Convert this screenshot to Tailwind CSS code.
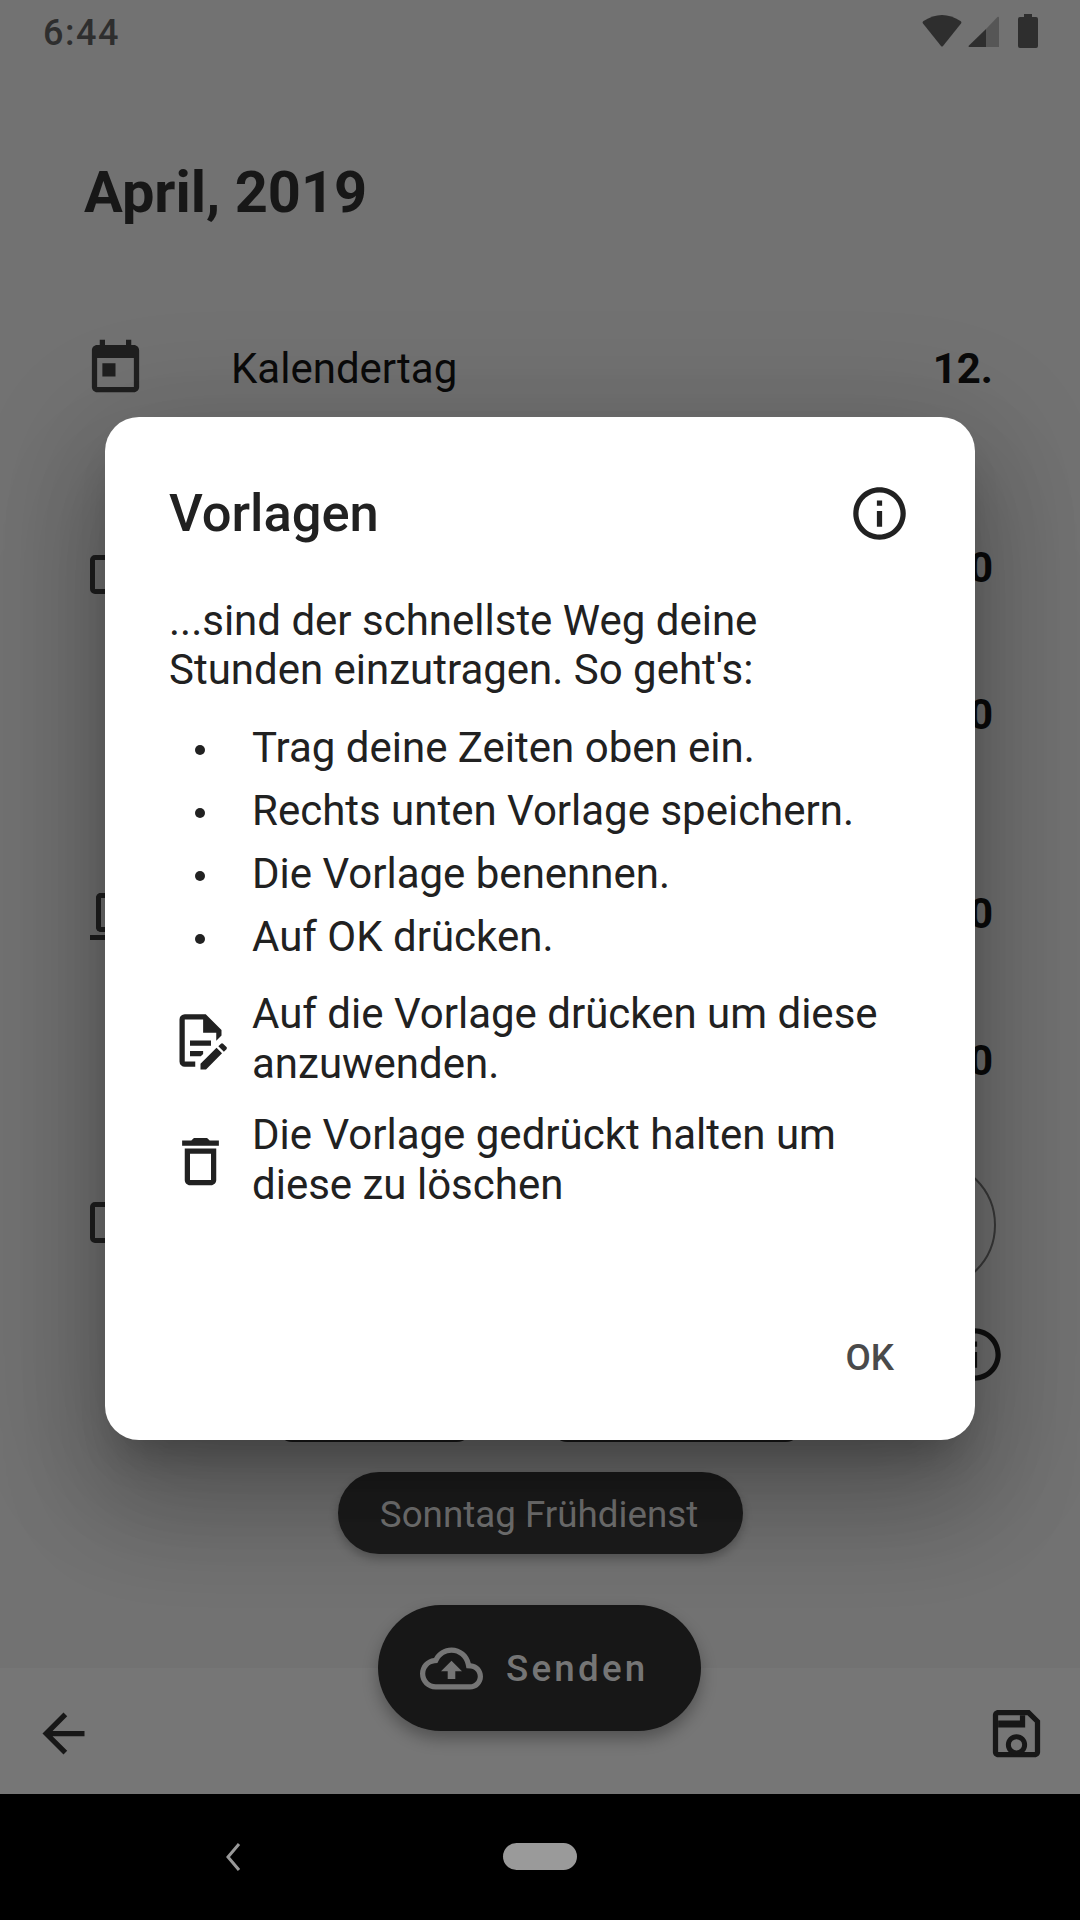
<!DOCTYPE html>
<html lang="de">

<head>
    <meta charset="UTF-8">
    <meta name="viewport" content="width=device-width, initial-scale=1.0">
    <title>Vorlagen</title>
    <script src="https://cdn.jsdelivr.net/npm/@tailwindcss/browser@4"></script>
</head>

<body class="font-[Roboto]">

    <div class="relative w-[1080px] h-[1920px] overflow-hidden bg-[#727272] flex flex-col">

        <!-- Status bar -->
        <div class="h-[62px] shrink-0 flex items-center justify-between pl-[43px] pr-[42px] text-[#2e2e2e]">
            <span class="pt-[3px] text-[36px] font-medium leading-none tracking-[1.5px]">6:44</span>
            <div class="flex items-center">
                <svg class="w-[40px] h-[32px]" viewBox="0 0 40 32"><path fill="#2e2e2e" d="M19 31 L1 8.5 Q0 7 1.5 6 Q20 -6 38.5 6 Q40 7 39 8.5 L21 31 Q20 32 19 31Z"/></svg>
                <svg class="w-[31px] h-[31px] ml-[6px]" viewBox="0 0 31 31"><path fill="#565656" d="M18 13 L29.5 1 Q31 0 31 2 V31 H18Z"/><path fill="#2e2e2e" d="M1 29.5 L18 13 V31 H1 Q0 31 1 29.5Z"/></svg>
                <svg class="w-[20px] h-[34px] ml-[19px]" viewBox="0 0 20 34"><path fill="#2e2e2e" d="M6 0h8v3h4q2 0 2 2v27q0 2-2 2H2q-2 0-2-2V5q0-2 2-2h4z"/></svg>
            </div>
        </div>

        <!-- Screen behind the dialog -->
        <h1 class="ml-[84px] mt-[95px] h-[70px] text-[57.75px] leading-[70px] font-bold text-[#171717]">April, 2019</h1>

        <div class="mt-[111px] flex items-center h-[60px] pl-[84px] pr-[87px] text-[#0a0a0a]">
            <svg class="w-[63px] h-[63px] shrink-0" viewBox="0 0 24 24" fill="#1f1f1f"><path d="M19 3h-1V1h-2v2H8V1H6v2H5c-1.11 0-1.99.9-1.99 2L3 19c0 1.1.89 2 2 2h14c1.1 0 2-.9 2-2V5c0-1.1-.9-2-2-2zm0 16H5V8h14v11zM7 10h5v5H7z"/></svg>
            <span class="ml-[84px] text-[42px]">Kalendertag</span>
            <span class="ml-auto text-[42px] font-bold">12.</span>
        </div>

        <div class="mt-[139px] flex items-center justify-between h-[60px] pl-[90px] pr-[87px]">
            <div class="mt-[14px] w-[40px] h-[39px] border-[5px] border-[#1f1f1f] rounded-[5px]"></div>
            <span class="text-[42px] font-bold text-[#0a0a0a]">0</span>
        </div>
        <div class="mt-[87px] flex justify-end items-center h-[60px] pr-[87px]">
            <span class="text-[42px] font-bold text-[#0a0a0a]">0</span>
        </div>
        <div class="mt-[139px] flex items-center justify-between h-[60px] pl-[90px] pr-[87px]">
            <div class="w-[40px] h-[47px] mt-[6px] flex flex-col">
                <div class="ml-[6px] flex-1 border-l-[5px] border-t-[5px] border-b-[5px] border-[#1f1f1f] rounded-l-[5px]"></div>
                <div class="mt-[3px] h-[5px] bg-[#1f1f1f]"></div>
            </div>
            <span class="text-[42px] font-bold text-[#0a0a0a]">0</span>
        </div>
        <div class="mt-[87px] flex justify-end items-center h-[60px] pr-[87px]">
            <span class="text-[42px] font-bold text-[#0a0a0a]">0</span>
        </div>

        <div class="mt-[70px] flex items-center justify-between h-[130px] pl-[90px] pr-[84px]">
            <div class="mb-[6px] w-[40px] h-[41px] border-[5px] border-[#1f1f1f] rounded-[5px]"></div>
            <div class="w-[130px] h-[130px] rounded-full border-2 border-[#3a3a3a]"></div>
        </div>

        <div class="mt-[33px] flex justify-end h-[63px] pr-[74px]">
            <svg class="w-[63px] h-[63px]" viewBox="0 0 24 24" fill="#111111"><path d="M11 7h2v2h-2zm0 4h2v6h-2zm1-9C6.48 2 2 6.48 2 12s4.48 10 10 10 10-4.48 10-10S17.52 2 12 2zm0 18c-4.41 0-8-3.59-8-8s3.59-8 8-8 8 3.59 8 8-3.59 8-8 8z"/></svg>
        </div>

        <div class="mt-[-14px] flex h-[70px] pl-[278px]">
            <div class="w-[193px] rounded-b-[14px] bg-[#1c1c1c]"></div>
            <div class="ml-[82px] w-[247px] rounded-b-[14px] bg-[#1c1c1c]"></div>
        </div>

        <!-- Selected template -->
        <div class="mt-[30px] self-center w-[405px] h-[82px] rounded-full bg-[#1c1c1c] shadow-[0_5px_10px_rgba(0,0,0,0.25)] flex items-center justify-center pr-[2px] pt-[3px] text-[36.75px] text-[#757575]">Sonntag Frühdienst</div>

        <!-- Bottom bar -->
        <div class="absolute left-0 right-0 top-[1668px] h-[126px] bg-[#767676] flex items-center justify-between px-[32px] pt-[4px]">
            <svg class="w-[63px] h-[63px]" viewBox="0 0 24 24" fill="#171717"><path d="M20 11H7.83l5.59-5.59L12 4l-8 8 8 8 1.41-1.41L7.83 13H20v-2z"/></svg>
            <svg class="w-[63px] h-[63px]" viewBox="0 0 24 24" fill="#171717"><path d="M17 3H5c-1.11 0-2 .9-2 2v14c0 1.1.89 2 2 2h14c1.1 0 2-.9 2-2V7l-4-4zm2 16H5V5h11.17L19 7.83V19z"/><path d="M5 7h8.3V5h2v4.7H5z"/><circle cx="12" cy="16.3" r="3.1" fill="none" stroke="#171717" stroke-width="1.9"/></svg>
        </div>

        <!-- Send button -->
        <div class="absolute left-[378px] top-[1605px] w-[323px] h-[126px] rounded-full bg-[#171717] shadow-[0_8px_16px_rgba(0,0,0,0.3)] flex items-center pl-[42px] text-[#757575]">
            <svg class="w-[63px] h-[63px] shrink-0" viewBox="0 0 24 24" fill="#757575"><path d="M19.35 10.04C18.67 6.59 15.64 4 12 4 9.11 4 6.6 5.64 5.35 8.04 2.34 8.36 0 10.91 0 14c0 3.31 2.69 6 6 6h13c2.76 0 5-2.24 5-5 0-2.64-2.05-4.78-4.65-4.96zM19 18H6c-2.21 0-4-1.79-4-4 0-2.05 1.53-3.76 3.56-3.97l1.07-.11.5-.95C8.08 7.14 9.94 6 12 6c2.62 0 4.88 1.86 5.39 4.43l.3 1.5 1.53.11c1.56.1 2.78 1.41 2.78 2.96 0 1.65-1.35 3-3 3zM8 13h2.55v3h2.9v-3H16l-4-4z"/></svg>
            <span class="ml-[23px] pt-[2px] text-[36.75px] font-medium tracking-[3.2px]">Senden</span>
        </div>

        <!-- Navigation bar -->
        <div class="absolute left-0 right-0 top-[1794px] bottom-0 bg-black">
            <svg class="absolute left-[224px] top-[49px] w-[18px] h-[28px]" viewBox="0 0 18 28" fill="none" stroke="#999999" stroke-width="3"><path d="M15 1 L4 14 L15 27"/></svg>
            <div class="absolute left-[503px] top-[49px] w-[74px] h-[27px] rounded-full bg-[#9a9a9a]"></div>
        </div>

        <!-- Dialog -->
        <div class="absolute left-[105px] top-[417px] w-[870px] h-[1023px] rounded-[34px] bg-white flex flex-col pl-[64px] pr-[64px] pt-[65px] pb-[57px] text-[#212121] shadow-[0_63px_100px_8px_rgba(0,0,0,0.18),0_24px_120px_21px_rgba(0,0,0,0.14),0_29px_40px_-18px_rgba(0,0,0,0.24)]">
            <div class="flex items-center justify-between h-[63px]">
                <h2 class="text-[52.5px] font-medium">Vorlagen</h2>
                <svg class="w-[63px] h-[63px]" viewBox="0 0 24 24" fill="#212121"><path d="M11 7h2v2h-2zm0 4h2v6h-2zm1-9C6.48 2 2 6.48 2 12s4.48 10 10 10 10-4.48 10-10S17.52 2 12 2zm0 18c-4.41 0-8-3.59-8-8s3.59-8 8-8 8 3.59 8 8-3.59 8-8 8z"/></svg>
            </div>

            <p class="mt-[51px] text-[42px] leading-[49px]">...sind der schnellste Weg deine<br>Stunden einzutragen. So geht's:</p>

            <div class="mt-[22px] text-[42px] grid grid-cols-[62px_1fr] gap-x-[21px] auto-rows-[63px] items-center">
                <div class="justify-self-center mt-[4px] w-[10px] h-[10px] rounded-full bg-[#212121]"></div>
                <div>Trag deine Zeiten oben ein.</div>
                <div class="justify-self-center mt-[4px] w-[10px] h-[10px] rounded-full bg-[#212121]"></div>
                <div>Rechts unten Vorlage speichern.</div>
                <div class="justify-self-center mt-[4px] w-[10px] h-[10px] rounded-full bg-[#212121]"></div>
                <div>Die Vorlage benennen.</div>
                <div class="justify-self-center mt-[4px] w-[10px] h-[10px] rounded-full bg-[#212121]"></div>
                <div>Auf OK drücken.</div>
            </div>

            <div class="mt-[21px] text-[42px] leading-[50px] grid grid-cols-[62px_1fr] gap-x-[21px] gap-y-[21px] items-center">
                <svg class="mt-[2px] w-[63px] h-[63px]" viewBox="0 0 24 24" fill="#212121"><path d="M8,12H16V14H8V12M10,20H6V4H13V9H18V12.1L20,10.1V8L14,2H6A2,2 0 0,0 4,4V20A2,2 0 0,0 6,22H10V20M8,18H12.1L13,17.1V16H8V18M20.2,13C20.3,13 20.5,13.1 20.6,13.2L21.9,14.5C22.1,14.7 22.1,15.1 21.9,15.3L20.9,16.3L18.8,14.2L19.8,13.2C19.9,13.1 20,13 20.2,13M20.2,16.9L14.1,23H12V20.9L18.1,14.8L20.2,16.9Z"/></svg>
                <div>Auf die Vorlage drücken um diese<br>anzuwenden.</div>
                <svg class="mt-[2px] w-[63px] h-[63px]" viewBox="0 0 24 24" fill="#212121"><path d="M6 19c0 1.1.9 2 2 2h8c1.1 0 2-.9 2-2V7H6v12zM8 9h8v10H8V9zm7.5-5l-1-1h-5l-1 1H5v2h14V4z"/></svg>
                <div>Die Vorlage gedrückt halten um<br>diese zu löschen</div>
            </div>

            <div class="mt-auto flex justify-end mr-[17px] text-[36.75px] leading-[50px] font-medium text-[#4a4a4a]">OK</div>
        </div>
    </div>

</body>

</html>
